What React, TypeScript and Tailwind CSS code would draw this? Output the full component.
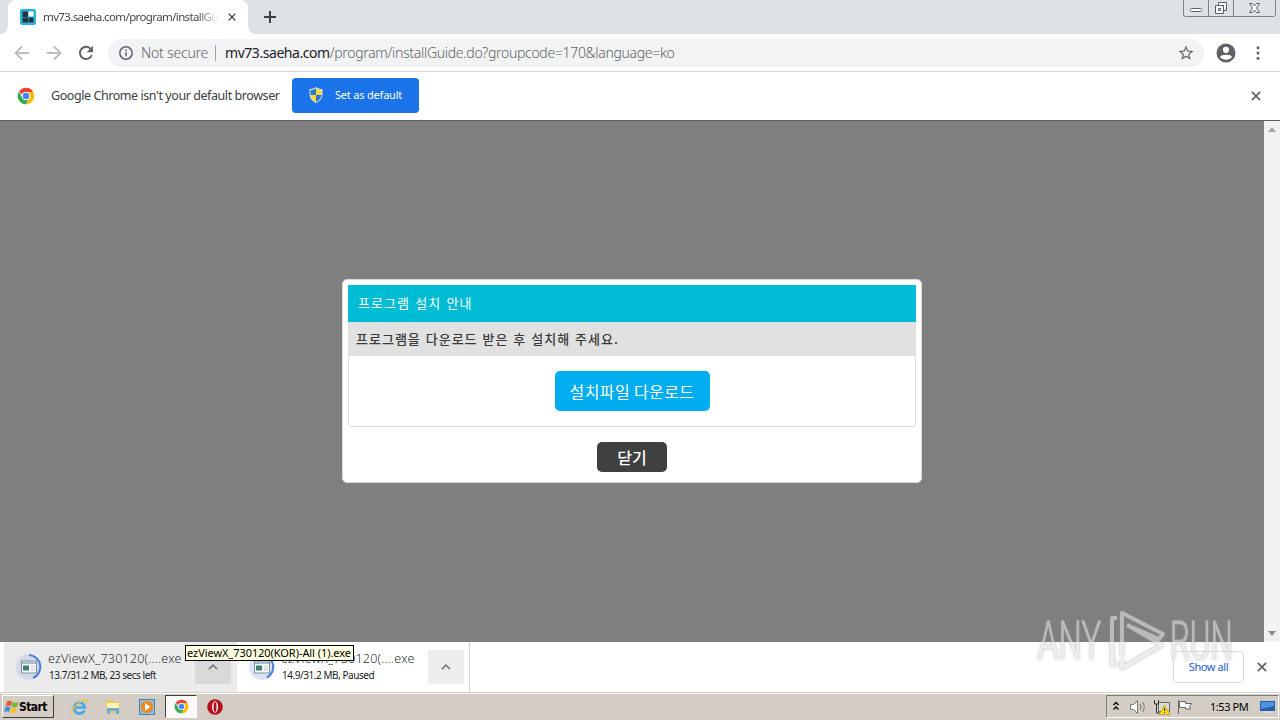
import type { ReactNode } from 'react';

function ChromeLogo({ className }: { className?: string }) {
  return (
    <svg viewBox="0 0 48 48" className={className}>
      <circle cx="24" cy="24" r="22" fill="#fff" />
      <path d="M24 2a22 22 0 0 1 19.05 11H24a11 11 0 0 0-10.4 7.4L5.6 12A22 22 0 0 1 24 2z" fill="#ea4335" />
      <path d="M43.05 13A22 22 0 0 1 23.5 46l9.9-16.3A11 11 0 0 0 31 15.500L24 13z" fill="#fbbc05" />
      <path d="M5.2 12.500A22 22 0 0 0 23.500 46l9.500-16.500a11 11 0 0 1-18.500 0z" fill="#34a853" />
      <circle cx="24" cy="24" r="11" fill="#fff" />
      <circle cx="24" cy="24" r="8.600" fill="#4285f4" />
    </svg>
  );
}

function CloseIcon({ className }: { className?: string }) {
  return (
    <svg viewBox="0 0 10 10" fill="none" stroke="currentColor" strokeWidth="1.7" className={className}>
      <path d="M.8.8l8.4 8.400M9.200.8L.8 9.200" />
    </svg>
  );
}

function Shield() {
  return (
    <svg viewBox="0 0 16 16" className="h-4 w-4">
      <path d="M8 0c2 1.500 4 2 6.500 2v5c0 4-2 7-6.500 9C3.500 14 1.500 11 1.500 7V2C4 2 6 1.500 8 0z" fill="#d8dde3" />
      <path d="M8 1.200V8H2.500V3C5 3 6.500 2.300 8 1.200z" fill="#2d78c8" />
      <path d="M8 1.200V8h5.500V3C11 3 9.500 2.300 8 1.200z" fill="#fbd63c" />
      <path d="M2.500 8H8v6.900C4.500 13.200 2.700 11 2.500 8z" fill="#fbd63c" />
      <path d="M13.500 8H8v6.900c3.500-1.700 5.300-3.900 5.500-6.900z" fill="#2d78c8" />
    </svg>
  );
}

function TabStrip() {
  return (
    <div className="flex h-[34px] bg-[#dee1e6]">
      <div className="relative ml-2 flex h-[34px] w-[240px] items-center rounded-t-lg bg-white pl-3">
        <svg viewBox="0 0 8 8" className="absolute bottom-0 -left-2 h-2 w-2"><path d="M8 0v8H0a8 8 0 0 0 8-8z" fill="#fff" /></svg>
        <svg viewBox="0 0 8 8" className="absolute -right-2 bottom-0 h-2 w-2"><path d="M0 0v8h8a8 8 0 0 1-8-8z" fill="#fff" /></svg>
        <svg viewBox="0 0 16 16" className="h-4 w-4 shrink-0">
          <rect width="16" height="16" rx="2" fill="#25b4dc" />
          <rect x="2.500" y="2.500" width="5.500" height="5.500" rx=".6" fill="#28333d" />
          <rect x="8.500" y="2.500" width="5" height="5" rx=".6" fill="#fff" />
          <rect x="2.500" y="8.500" width="5.500" height="5" rx=".6" fill="#28333d" />
          <rect x="8.500" y="8.500" width="5" height="5" rx=".6" fill="#28333d" />
        </svg>
        <div className="ml-[7px] w-[176px] overflow-hidden bg-gradient-to-r from-[#3c4043] from-88% to-transparent bg-clip-text text-[11.5px] tracking-[-0.62px] whitespace-nowrap text-transparent">
          mv73.saeha.com/program/installGuide.do
        </div>
        <CloseIcon className="ml-[9px] h-2 w-2 shrink-0 text-[#3c4043]" />
      </div>
      <svg viewBox="0 0 12 12" className="mt-[11px] ml-4 h-3 w-3" stroke="#3c4043" strokeWidth="2"><path d="M6 0v12M0 6h12" /></svg>
      <svg viewBox="0 0 93 17" className="mr-1 ml-auto h-[17px] w-[93px]" fill="none" stroke="#7c8188">
        <path d="M.5 0v14.500q0 2 2 2h88q2 0 2-2V0M25.500 0v16M50.500 0v16" />
        <g stroke="#5b6068" fill="#fff">
          <rect x="7.500" y="8.500" width="11" height="3" rx="1" />
          <path d="M35.500 2.500h8v8h-8z" />
          <path d="M32.500 5.500h8v8h-8z" />
          <path d="M35.500 8.500h2v2h-2z" />
          <path d="M66.500 3.500h3l2 2.500 2-2.500h3l-3 4.500 3 4.500h-3l-2-2.500-2 2.500h-3l3-4.500z" />
        </g>
      </svg>
    </div>
  );
}

function Toolbar() {
  return (
    <div className="flex h-[38px] items-center border-b border-[#d5d7da] bg-white pl-[14px]">
      <svg viewBox="0 0 16 16" className="h-4 w-4" fill="none" stroke="#babcbe" strokeWidth="1.800"><path d="M15 8H2M8 1.500L1.500 8 8 14.500" /></svg>
      <svg viewBox="0 0 16 16" className="ml-4 h-4 w-4" fill="none" stroke="#babcbe" strokeWidth="1.800"><path d="M1 8h13M8 1.500L14.500 8 8 14.500" /></svg>
      <svg viewBox="0 0 16 16" className="ml-4 h-4 w-4">
        <path d="M13 4.300A6.100 6.100 0 1 0 13.800 10" fill="none" stroke="#5f6368" strokeWidth="2" />
        <path d="M15 .8v6.400H8.600z" fill="#5f6368" />
      </svg>
      <div className="ml-[14px] flex h-7 w-[1096px] items-center rounded-full bg-[#f1f3f4] pl-[11px]">
        <svg viewBox="0 0 14 14" className="h-[14px] w-[14px]" fill="none" stroke="#5f6368" strokeWidth="1.500">
          <circle cx="7" cy="7" r="6.200" /><path d="M7 6v4.200M7 3.500v1.500" />
        </svg>
        <span className="ml-2 w-[75px] text-sm font-light tracking-[-0.2px] whitespace-nowrap text-[#5f6368]">Not secure</span>
        <span className="-ml-px h-4 w-px bg-[#9aa0a6]" />
        <span className="ml-[9px] text-sm font-light tracking-[-0.31px] whitespace-nowrap text-[#5f6368]">
          <span className="font-normal tracking-[-0.45px] text-[#202124]">mv73.saeha.com</span>/program/installGuide.do?groupcode=170&amp;language=ko
        </span>
        <svg viewBox="0 0 24 24" className="mr-[9px] ml-auto h-[18px] w-[18px]" fill="#5f6368">
          <path d="M22 9.240l-7.190-.62L12 2 9.190 8.630 2 9.240l5.460 4.730L5.820 21 12 17.270 18.180 21l-1.630-7.030L22 9.240zM12 15.400l-3.760 2.270 1-4.280-3.320-2.880 4.380-.38L12 6.100l1.710 4.040 4.380.38-3.320 2.880 1 4.280L12 15.400z" />
        </svg>
      </div>
      <svg viewBox="0 0 20 20" className="ml-3 h-5 w-5">
        <circle cx="10" cy="10" r="9.500" fill="#5f6368" />
        <circle cx="10" cy="6.800" r="3.100" fill="#fff" />
        <path d="M4 14c1-3 11-3 12 0-2.800 3.600-9.200 3.600-12 0z" fill="#fff" />
      </svg>
      <svg viewBox="0 0 4 16" className="ml-5 h-4 w-1" fill="#5f6368">
        <circle cx="2" cy="2.700" r="1.500" /><circle cx="2" cy="8" r="1.500" /><circle cx="2" cy="13.300" r="1.500" />
      </svg>
    </div>
  );
}

function InfoBar() {
  return (
    <div className="flex h-[49px] items-center border-b border-[#616161] bg-white pl-[17px]">
      <ChromeLogo className="h-[18px] w-[18px]" />
      <span className="ml-4 w-[241px] text-[12.500px] tracking-[-0.43px] whitespace-nowrap text-[#3c4043]">Google Chrome isn't your default browser</span>
      <button className="mb-[2px] flex h-[35px] w-[127px] items-center rounded-[4px] bg-[#1a73e8] pl-4 text-[11px] tracking-[-0.2px] whitespace-nowrap text-white">
        <Shield />
        <span className="ml-[11px]">Set as default</span>
      </button>
      <CloseIcon className="mr-[19px] ml-auto h-[10px] w-[10px] text-[#5f6368]" />
    </div>
  );
}

function InstallDialog() {
  return (
    <div className="flex h-[204px] w-[580px] flex-col items-center rounded-[5px] border border-[#d9d9d9] bg-white pt-[5px] font-['Noto_Sans_CJK_KR',sans-serif]">
      <div className="flex h-[37px] w-[568px] items-center bg-[#00bcd4] pb-px pl-[10px] text-[13px] text-white">
        <span className="tracking-[1px] [word-spacing:1.5px]">프로그램 설치 안내</span>
      </div>
      <div className="h-[105px] w-[568px] rounded-b-[3px] border border-t-0 border-[#dedede]">
        <div className="flex h-[34px] items-center bg-[#e1e1e1] pb-px pl-[7px] text-[13px] font-medium text-[#3a3a3a]">
          <span className="tracking-[1px] [word-spacing:1px]">프로그램을 다운로드 받은 후 설치해 주세요.</span>
        </div>
        <div className="flex justify-center pt-[15px]">
          <button className="h-10 w-[155px] rounded-[5px] bg-[#00aeef] text-base tracking-[0.4px] whitespace-nowrap text-white">설치파일 다운로드</button>
        </div>
      </div>
      <button className="mt-[15px] h-[30px] w-[70px] rounded-[5px] bg-[#404040] text-base font-medium text-white">닫기</button>
    </div>
  );
}

function FileIcon({ arc, tint }: { arc: string; tint: string }) {
  return (
    <svg viewBox="0 0 28 28" className="h-7 w-7 shrink-0">
      <circle cx="14" cy="14" r="13" fill={tint} />
      <path d={arc} fill="none" stroke="#4a7fd6" strokeWidth="2" />
      <rect x="6.500" y="8" width="15" height="12" fill="#fff" stroke="#7c8b98" />
      <path d="M7 8.500h14v2.500H7z" fill="#a9bccb" />
      <path d="M8 12.500h6v5H8z" fill="#3b7f72" />
      <path d="M15.500 13h4.500M15.500 15h4.500M15.500 17h4.500" stroke="#c3ccd2" />
    </svg>
  );
}

function Download({ detail, arc, active }: { detail: string; arc: string; active?: boolean }) {
  return (
    <div className={active ? 'flex h-[50px] w-[233px] items-center bg-[#ebebeb] pl-[11px]' : 'flex h-[50px] w-[233px] items-center border-r border-[#d5d5d5] bg-white pl-[11px]'}>
      <FileIcon arc={arc} tint={active ? '#d3dae8' : '#dbe4f5'} />
      <div className="mb-[2px] ml-[5px] w-[147px] whitespace-nowrap">
        <div className="text-[12.500px] leading-[17px] font-light tracking-[0.22px] text-[#2f3235]">ezViewX_730120(....exe</div>
        <div className="ml-px text-[10px] leading-4 tracking-[-0.45px] text-[#202124]">{detail}</div>
      </div>
      <div className={active ? 'flex h-[34px] w-9 items-center justify-center bg-[#d9d9d9]' : 'flex h-[34px] w-9 items-center justify-center bg-[#ededed]'}>
        <svg viewBox="0 0 10 6" className="h-[6px] w-[10px]" fill="none" stroke="#777" strokeWidth="1.600"><path d="M.8 5.300L5 1.200l4.200 4.100" /></svg>
      </div>
    </div>
  );
}

function DownloadShelf() {
  return (
    <div className="relative flex h-[50px] items-start bg-white pl-1">
      <Download active detail="13.7/31.2 MB, 23 secs left" arc="M14 2a12 12 0 0 1 4 23" />
      <Download detail="14.9/31.2 MB, Paused" arc="M14 2a12 12 0 0 1 5 22.500" />
      <button className="mt-[9px] ml-auto h-8 w-[71px] rounded-[4px] border border-[#dadce0] text-[11px] tracking-[-0.4px] whitespace-nowrap text-[#1a5fc4]">Show all</button>
      <CloseIcon className="mt-5 mr-[13px] ml-[13px] h-[10px] w-[10px] text-[#5f6368]" />
      <div className="absolute top-[3px] left-[185px] h-4 w-[169px] border border-black bg-[#ffffe1] pl-px text-[11px] leading-[14px] tracking-[-0.06px] whitespace-nowrap text-black">
        ezViewX_730120(KOR)-All (1).exe
      </div>
    </div>
  );
}

function Watermark() {
  return (
    <div className="pointer-events-none absolute top-[608px] left-[1038px] flex h-[66px] items-center text-[53px] leading-none font-light text-[#e2e2e2] opacity-60 drop-shadow-[0_0_1.5px_#8a8a8a]">
      <span className="w-[70px] origin-left scale-x-[0.62] font-['Roboto',sans-serif] [-webkit-text-stroke:1px_#e2e2e2]">ANY</span>
      <svg viewBox="0 0 60 66" className="h-[66px] w-[60px] shrink-0" fill="none" stroke="currentColor" strokeWidth="4" strokeLinejoin="round">
        <path d="M9 10H4v46h5M14 48V5l41 21-4 5-32-14M19 17l35 20-40 23v-8" />
      </svg>
      <span className="ml-[2px] w-[64px] origin-left scale-x-[0.59] font-['Roboto',sans-serif] [-webkit-text-stroke:1px_#e2e2e2]">RUN</span>
    </div>
  );
}

function Slot({ children, active }: { children: ReactNode; active?: boolean }) {
  return (
    <div className={active ? 'flex h-[23px] w-8 items-center justify-center border border-t-[#404040] border-r-white border-b-white border-l-[#404040] bg-[#fbfaf9]' : 'flex h-[23px] w-8 items-center justify-center'}>
      {children}
    </div>
  );
}

function Taskbar() {
  return (
    <div className="flex h-7 items-center border-t border-[#d4d0c8] bg-[#d4cdc5] shadow-[inset_0_1px_0_#fff]">
      <button className="ml-[2px] flex h-[23px] w-[52px] items-center border border-t-white border-r-[#404040] border-b-[#404040] border-l-white text-[12px] font-bold text-black">
        <svg viewBox="0 0 16 16" className="h-4 w-4 shrink-0">
          <path d="M4 2.500q2.500-1.500 5 0L7.700 7.200q-2.500-1.500-5 0z" fill="#e8552a" />
          <path d="M9.500 3q2.500 1.500 6 0l-1.300 4.700q-2.500 1.300-5.900 0z" fill="#76b43a" />
          <path d="M2.200 8.200q2.500-1.400 5 0l-1.200 4.700q-2.500-1.400-5 0z" fill="#3c8ede" />
          <path d="M8 8.700q2.500 1.500 5.700 0l-1.200 4.700q-2.500 1.400-5.700 0z" fill="#f6bf28" />
        </svg>
        <span className="pt-px font-['DejaVu_Sans_Condensed','DejaVu_Sans',sans-serif] tracking-[-0.55px]">Start</span>
      </button>
      <div className="ml-[9px] flex gap-[2px]">
        <Slot>
          <svg viewBox="0 0 18 18" className="h-[18px] w-[18px]" fill="none">
            <path d="M14.500 12.500A5.500 5.500 0 1 1 15 9.500H4.500" stroke="#43a9e6" strokeWidth="2.600" />
            <path d="M2 16C-1 12.500 13-.5 16.500 2.500q1 1-.5 3" stroke="#eebc39" strokeWidth="1.300" />
          </svg>
        </Slot>
        <Slot>
          <svg viewBox="0 0 18 18" className="h-[18px] w-[18px]">
            <path d="M2 2h6l1 2h7v11H2z" fill="#ecc75f" /><path d="M3 5h12v6H3z" fill="#fff3b6" />
            <path d="M3 16v-6h12v6h-3v-3H6v3z" fill="#6aaee0" />
          </svg>
        </Slot>
        <Slot>
          <svg viewBox="0 0 18 18" className="h-[18px] w-[18px]">
            <rect x="1.500" y="1.500" width="15" height="15" fill="#8fc0e6" stroke="#4c80ac" />
            <circle cx="9" cy="9" r="6.200" fill="#f08a1d" /><path d="M7 5.300L12.500 9 7 12.800z" fill="#fff" />
          </svg>
        </Slot>
        <Slot active><ChromeLogo className="h-[15px] w-[15px]" /></Slot>
        <Slot>
          <svg viewBox="0 0 18 18" className="h-[18px] w-[18px]">
            <circle cx="9" cy="9" r="7.800" fill="#b5121b" /><ellipse cx="9" cy="9" rx="3" ry="5.800" fill="#fff" /><ellipse cx="9" cy="9" rx="1.500" ry="5" fill="#b5121b" />
          </svg>
        </Slot>
      </div>
      <div className="mr-[1px] ml-auto flex h-[23px] w-[173px] items-center border border-t-[#808080] border-r-white border-b-white border-l-[#808080] pl-[5px] text-[11px] text-black">
        <svg viewBox="0 0 8 10" className="mb-[2px] h-[10px] w-2" fill="none" stroke="#000" strokeWidth="1.400"><path d="M1.500 4l2.500-2.500L6.500 4M1.500 8.500L4 6l2.500 2.500" /></svg>
        <svg viewBox="0 0 18 16" className="ml-[9px] h-4 w-[18px]" fill="#fff" stroke="#777">
          <path d="M1.500 5.500h3l4-4v13l-4-4h-3z" /><path d="M11 5q2 3 0 6M13.500 3q3.500 5 0 10" fill="none" />
        </svg>
        <svg viewBox="0 0 18 16" className="ml-[6px] h-4 w-[18px]">
          <path d="M5.500 3.500h11v9h-11z" fill="#ddd" stroke="#666" /><path d="M1.500 1v4h4V1M3.500 5v9h5" fill="none" stroke="#333" />
          <path d="M11.500 6l5.500 9.500H6z" fill="#ffd91c" stroke="#a28a00" strokeWidth=".6" /><path d="M11.500 9v3M11.500 13v1" stroke="#222" />
        </svg>
        <svg viewBox="0 0 18 16" className="ml-[6px] h-4 w-[18px]" fill="#fff" stroke="#666"><path d="M1.500 1v14" /><path d="M2.500 2.500h6v2h6l-2 3 1 2.500H8.500v-1.500h-6z" /></svg>
        <span className="ml-[15px] w-[46px] pt-px tracking-[-0.45px] whitespace-nowrap">1:53 PM</span>
        <svg viewBox="0 0 16 14" className="ml-1 h-[14px] w-4"><path d="M0 1h15v10H0z" fill="#245fb0" /><path d="M1 2h13v4L1 9z" fill="#4e91df" /><path d="M5 11h6l1 2H4z" fill="#ddd" /></svg>
      </div>
    </div>
  );
}

export default function App() {
  return (
    <main className="relative flex h-[720px] w-[1280px] flex-col overflow-hidden bg-white font-['Noto_Sans',sans-serif]">
      <TabStrip />
      <Toolbar />
      <InfoBar />
      <div className="flex h-[521px] bg-[#7f7f7f]">
        <div className="flex flex-1 justify-center pt-[158px]">
          <InstallDialog />
        </div>
        <div className="flex w-4 flex-col items-center justify-between bg-[#f1f1f1] py-[6px]">
          <svg viewBox="0 0 8 5" className="h-[5px] w-2" fill="#a3a3a3"><path d="M4 0l4 5H0z" /></svg>
          <svg viewBox="0 0 8 5" className="h-[5px] w-2" fill="#8a8a8a"><path d="M4 5L0 0h8z" /></svg>
        </div>
      </div>
      <DownloadShelf />
      <Taskbar />
      <Watermark />
    </main>
  );
}
